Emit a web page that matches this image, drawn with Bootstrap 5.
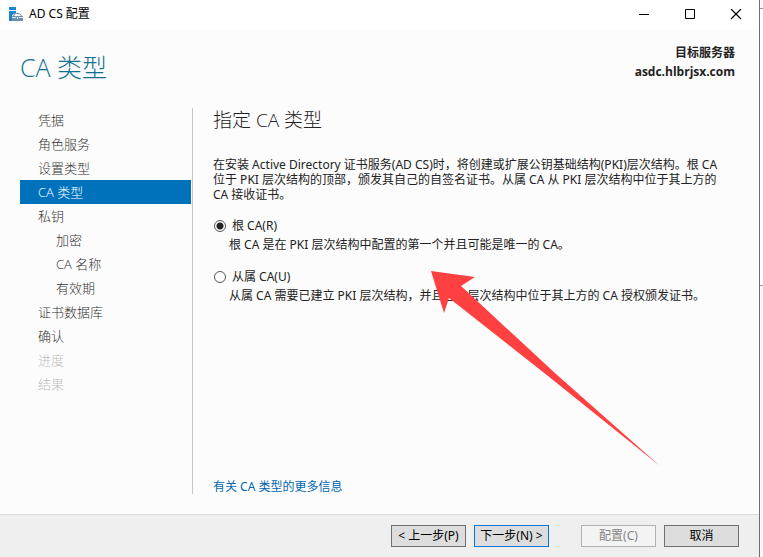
<!DOCTYPE html>
<html lang="zh-CN">
<head>
<meta charset="utf-8">
<meta name="viewport" content="width=device-width, initial-scale=1">
<title>AD CS 配置</title>
<link href="https://cdn.jsdelivr.net/npm/bootstrap@5.3.0/dist/css/bootstrap.min.css" rel="stylesheet">
<style>
  body { font: 12px/15px "Noto Sans", "Noto Sans CJK SC", sans-serif; color: #222; background: #fcfcfc; }
  .wizard { border-right: 1px solid #6f6f6f; }
  .title-bar { height: 29px; padding-left: 9px; background: #fff; color: #000; }
  .title-bar h1 { font-size: 12px; line-height: 16px; padding-left: 5px; padding-bottom: 2px; }
  .win-btn { width: 46px; height: 28px; border: 0; background: transparent; }
  .page-title { font-family: "Open Sans", "Noto Sans CJK SC", sans-serif; font-size: 25px; line-height: 32px; font-weight: 300; color: #11718f; }
  .page-head { padding: 14px 24px 0 20px; height: 79px; }
  .page-title { padding-top: 8px; }
  .target { font-family: "Open Sans", "Noto Sans CJK SC", sans-serif; font-size: 12px; line-height: 19px; }
  .steps { font-family: "Open Sans", "Noto Sans CJK SC", sans-serif; width: 193px; padding-left: 20px; padding-right: 1px; border-right: 1px solid #c6c6c6; }
  .steps a { height: 24px; padding: 0 0 0 18px; font-size: 13px; line-height: 24px; font-weight: 300; color: #333; border-radius: 0; }
  .steps a.sub-step { padding-left: 36px; }
  .steps a.active { background: #0072bc; color: #fff; }
  .steps a.disabled { color: #bdbdbd; }
  .page-body { padding-bottom: 20px; }
  .content-pane { padding: 0 30px 0 20px; }
  .content-pane h3 { font-family: "Open Sans", "Noto Sans CJK SC", sans-serif; font-size: 19px; line-height: 24px; font-weight: 300; margin-bottom: 25px; }
  .intro { margin-bottom: 15px; }
  .choice { margin-bottom: 15px; }
  .choice label { line-height: 17px; }
  .choice p { padding-left: 16px; margin-top: 3px; line-height: 16px; }
  .choice input { appearance: none; width: 12px; height: 12px; margin: 0 6px 0 1px; border: 1px solid #555; border-radius: 50%; background: #fff; }
  .choice input:checked { background: radial-gradient(circle, #222 0 3px, #fff 4px); }
  .more-link { color: #0066b4; line-height: 15px; }
  .wizard-foot { padding: 10px 20px 10px 0; background: #efefef; border-top: 1px solid #dadada; }
  .cmd { width: 75px; height: 22px; padding: 0; font-size: 12px; line-height: 20px; color: #000; background: #ddd; border: 1px solid #6f6f6f; white-space: nowrap; }
  .cmd.default { border-color: #0078d7; }
  .cmd:disabled { color: #858585; background: #f3f3f3; border-color: #adb2b5; }
  .backdrop-edge { width: 3px; }
  .edge-top { height: 9px; background: #f8f8f8; border-bottom: 1px solid #999; }
  .edge-mid { height: 277px; background: #fff; border-bottom: 1px solid #999; }
  .edge-low { background: #f8f8f8; }
  .pointer-arrow { position: absolute; left: 430px; top: 270px; pointer-events: none; }
</style>
</head>
<body>
<div class="d-flex min-vh-100 position-relative">
  <div class="wizard d-flex flex-column flex-grow-1">
    <header class="title-bar d-flex align-items-center">
      <svg width="15" height="15" viewBox="0 0 15 15" aria-hidden="true">
        <path d="M0 0H7V3H0Z M0 4H7V6L3 8V14H0Z" fill="#1c85d0"/>
        <path d="M3 9H14V14H3Z" fill="#6f8ea8"/>
        <path d="M4 9.500L6.500 6.500H10.500L13 9.500" fill="none" stroke="#6f8ea8"/>
        <path d="M3 10.500H7M10 10.500H14" stroke="#dce5ec"/>
        <path d="M8 10H9V12H8Z" fill="#fff"/>
      </svg>
      <h1 class="mb-0 fw-normal">AD CS 配置</h1>
      <div class="ms-auto d-flex">
        <button class="win-btn p-0" type="button" aria-label="最小化"><svg class="d-block mx-auto" width="12" height="12"><path d="M1 5.500H11" stroke="#000"/></svg></button>
        <button class="win-btn p-0" type="button" aria-label="最大化"><svg class="d-block mx-auto" width="12" height="12"><path d="M1.500 .500H10.500V9.500H1.500Z" fill="none" stroke="#000"/></svg></button>
        <button class="win-btn p-0" type="button" aria-label="关闭"><svg class="d-block mx-auto" width="12" height="12"><path d="M1 0L11 10M11 0L1 10" stroke="#000" stroke-width="1.200"/></svg></button>
      </div>
    </header>
    <div class="page-head d-flex justify-content-between align-items-start">
      <h2 class="page-title mb-0">CA 类型</h2>
      <div class="target text-end fw-bold">
        <div>目标服务器</div>
        <div>asdc.hlbrjsx.com</div>
      </div>
    </div>
    <div class="page-body d-flex flex-grow-1">
      <nav class="steps nav flex-column flex-nowrap flex-shrink-0" aria-label="步骤">
        <a class="nav-link" href="#">凭据</a>
        <a class="nav-link" href="#">角色服务</a>
        <a class="nav-link" href="#">设置类型</a>
        <a class="nav-link active" href="#" aria-current="step">CA 类型</a>
        <a class="nav-link" href="#">私钥</a>
        <a class="nav-link sub-step" href="#">加密</a>
        <a class="nav-link sub-step" href="#">CA 名称</a>
        <a class="nav-link sub-step" href="#">有效期</a>
        <a class="nav-link" href="#">证书数据库</a>
        <a class="nav-link" href="#">确认</a>
        <a class="nav-link disabled" href="#" aria-disabled="true">进度</a>
        <a class="nav-link disabled" href="#" aria-disabled="true">结果</a>
      </nav>
      <main class="content-pane d-flex flex-column flex-grow-1">
        <h3>指定 CA 类型</h3>
        <p class="intro">在安装 Active Directory 证书服务(AD CS)时，将创建或扩展公钥基础结构(PKI)层次结构。根 CA 位于 PKI 层次结构的顶部，颁发其自己的自签名证书。从属 CA 从 PKI 层次结构中位于其上方的 CA 接收证书。</p>
        <div class="choice">
          <div class="d-flex align-items-center"><input type="radio" name="ca" id="rootCa" checked><label for="rootCa">根 CA(R)</label></div>
          <p class="mb-0">根 CA 是在 PKI 层次结构中配置的第一个并且可能是唯一的 CA。</p>
        </div>
        <div class="choice">
          <div class="d-flex align-items-center"><input type="radio" name="ca" id="subCa"><label for="subCa">从属 CA(U)</label></div>
          <p class="mb-0">从属 CA 需要已建立 PKI 层次结构，并且已在层次结构中位于其上方的 CA 授权颁发证书。</p>
        </div>
        <a class="more-link mt-auto align-self-start text-decoration-none" href="#">有关 CA 类型的更多信息</a>
      </main>
    </div>
    <footer class="wizard-foot d-flex justify-content-end gap-2">
      <button class="cmd btn rounded-0" type="button">&lt; 上一步(P)</button>
      <button class="cmd btn rounded-0 default" type="button">下一步(N) &gt;</button>
      <button class="cmd btn rounded-0 ms-4 opacity-100" type="button" disabled>配置(C)</button>
      <button class="cmd btn rounded-0" type="button">取消</button>
    </footer>
  </div>
  <div class="backdrop-edge d-flex flex-column flex-shrink-0" aria-hidden="true">
    <div class="edge-top"></div>
    <div class="edge-mid"></div>
    <div class="edge-low flex-grow-1"></div>
  </div>
  <svg class="pointer-arrow" width="231" height="197" viewBox="0 0 231 197" aria-hidden="true">
    <path d="M1 1L45 7L31 16L126 104L230 196L118 106L19 28L14 43Z" fill="#ff4040"/>
  </svg>
</div>
<script src="https://cdn.jsdelivr.net/npm/bootstrap@5.3.0/dist/js/bootstrap.bundle.min.js"></script>
</body>
</html>
